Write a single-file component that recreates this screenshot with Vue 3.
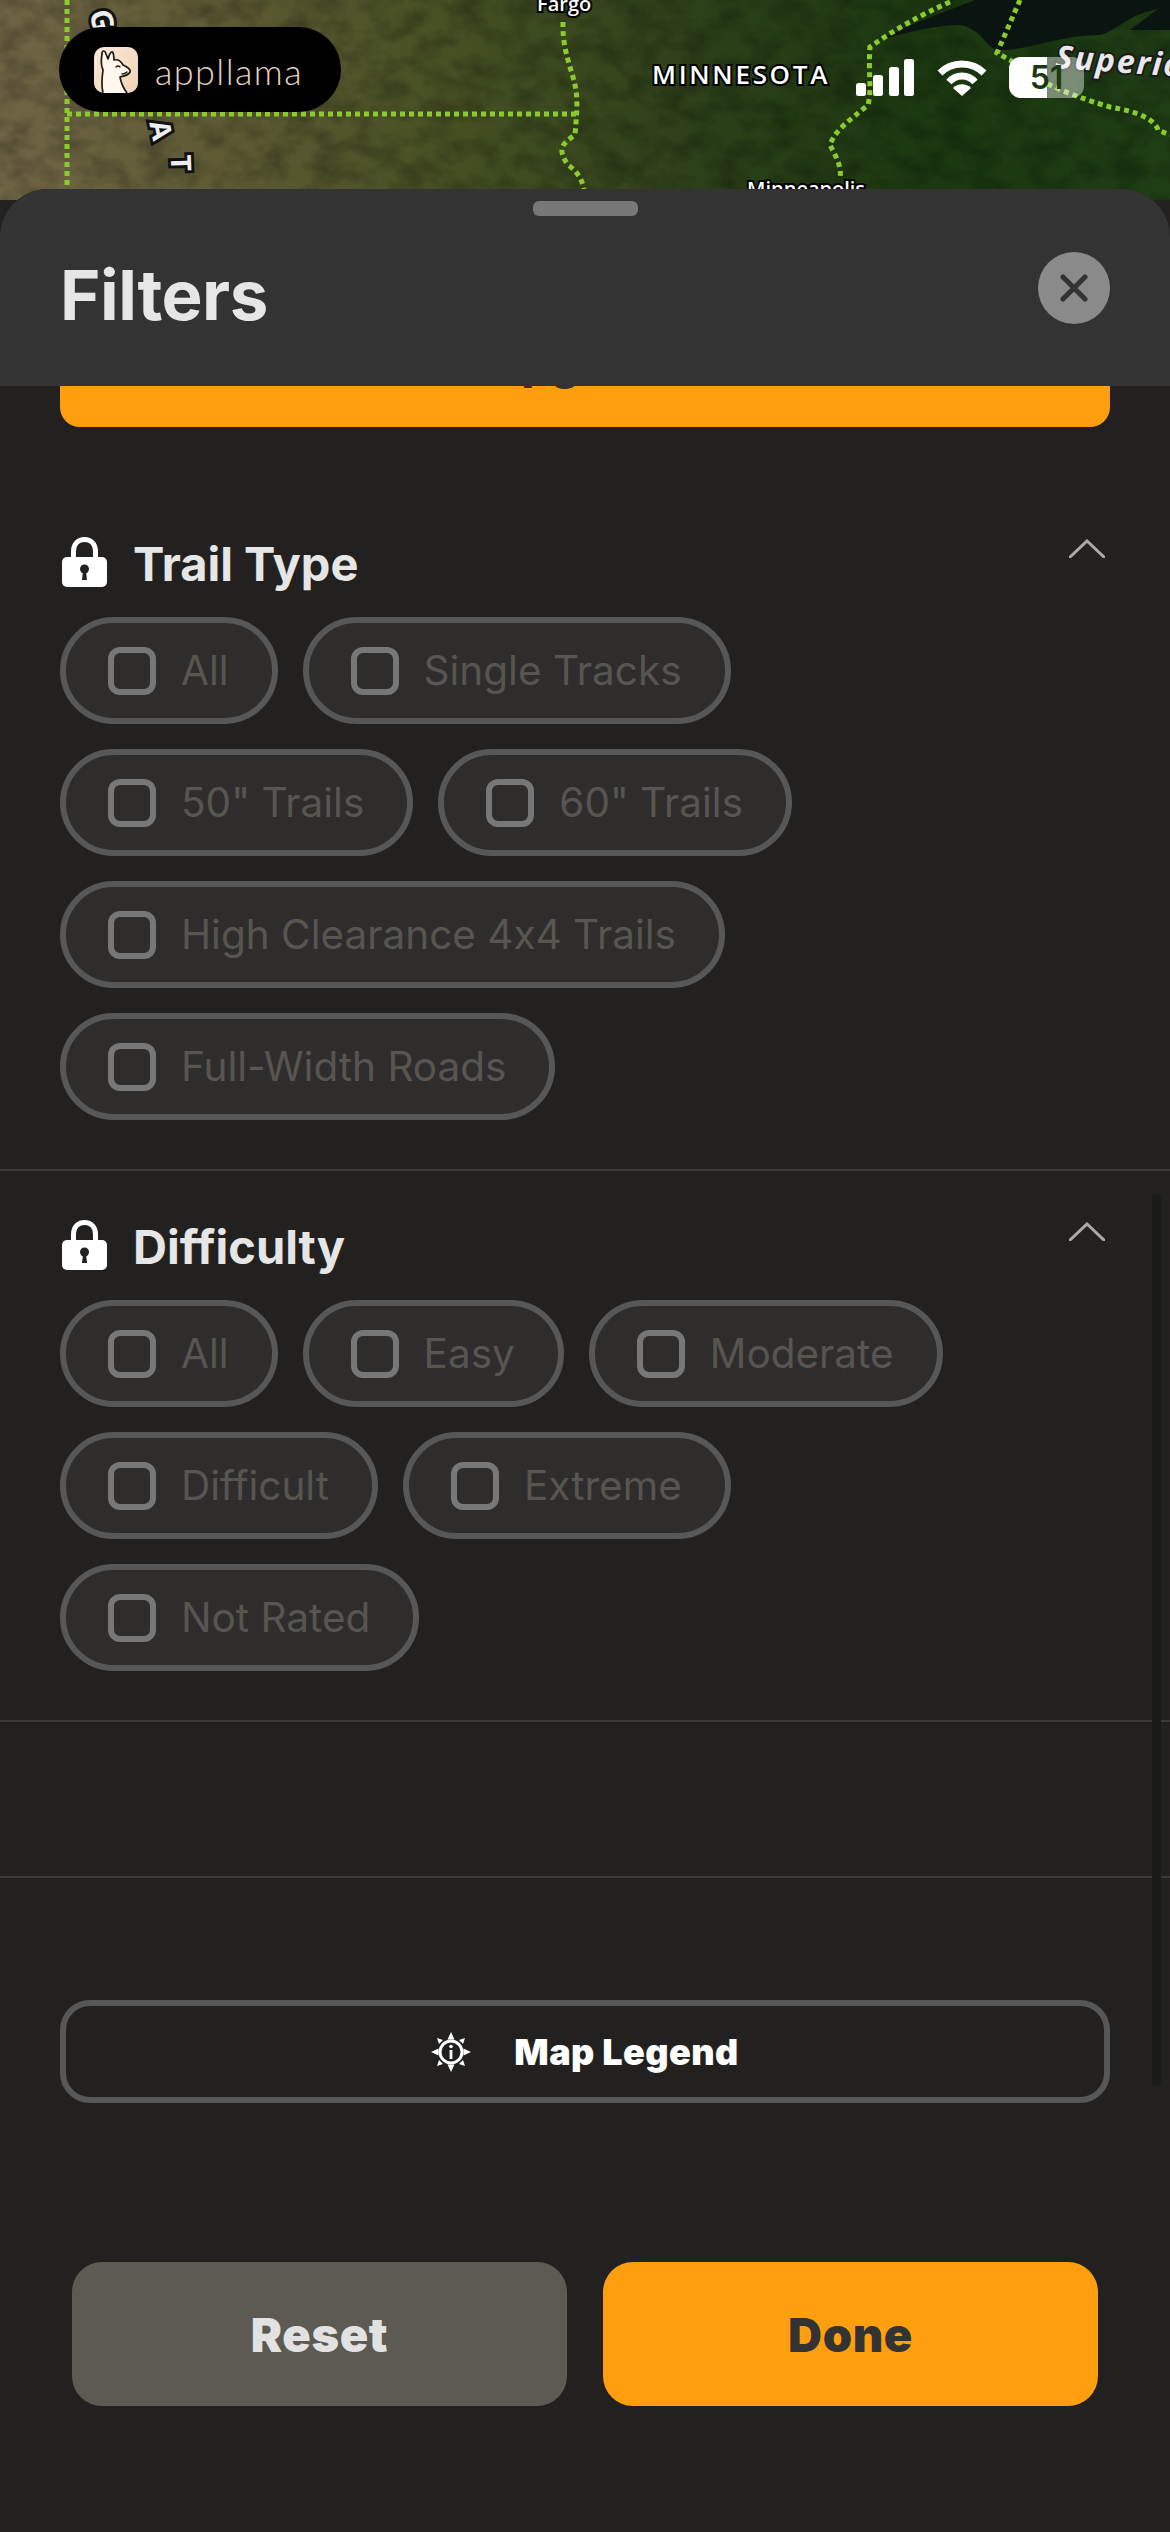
<template>
  <div class="screen">
    <!-- map behind the sheet -->
    <svg class="map" viewBox="0 0 1170 200" width="1170" height="200">
      <defs>
        <linearGradient id="land" x1="0" x2="1" y1="0" y2="0">
          <stop offset="0" stop-color="#6f6545" />
          <stop offset="0.2" stop-color="#5d5a33" />
          <stop offset="0.38" stop-color="#465023" />
          <stop offset="0.6" stop-color="#2c4019" />
          <stop offset="0.8" stop-color="#1b3810" />
          <stop offset="1" stop-color="#1f3e15" />
        </linearGradient>
        <linearGradient id="peach" x1="0" x2="1" y1="0" y2="1">
          <stop offset="0" stop-color="#fbeadb" />
          <stop offset="1" stop-color="#f0d2b2" />
        </linearGradient>
        <filter id="grain" x="0" y="0" width="100%" height="100%">
          <feTurbulence type="fractalNoise" baseFrequency="0.035 0.05" numOctaves="3" seed="7" />
          <feColorMatrix values="0 0 0 0 0  0 0 0 0 0  0 0 0 0 0  1.5 0 0 0 -0.55" />
        </filter>
      </defs>
      <rect width="1170" height="200" fill="url(#land)" />
      <rect width="1170" height="200" filter="url(#grain)" opacity="0.35" />
      <path d="M880 40 C920 20 950 10 975 0 H1170 V8 C1130 10 1120 30 1100 35 C1060 35 1030 50 1000 50 C985 50 985 30 960 25 C930 25 900 35 880 40Z" fill="#0a1410" />
      <path d="M1130 30 L1170 0 V30Z" fill="#0a1410" />

      <g class="border">
        <path d="M67 0 V189" />
        <path d="M67 114 H577" />
        <path d="M563 22 C562 50 572 70 575 85 C578 100 577 110 575 135 C560 145 558 150 568 165 C578 172 582 180 584 189" />
        <path d="M950 2 C920 15 895 30 880 40 L870 47 C868 70 872 90 868 105 C850 120 835 130 830 145 C835 155 842 165 840 180" />
        <path d="M1020 0 L997 53 L1010 60 C1040 85 1080 98 1110 107 C1140 112 1155 120 1158 130 L1170 135" />
      </g>

      <g class="label">
        <text class="label-city" x="537" y="11" font-size="20">Fargo</text>
        <text class="label-city" x="747" y="196" font-size="20">Minneapolis</text>
        <text class="label-state" x="652" y="84" font-size="26">MINNESOTA</text>
        <text class="label-water" transform="translate(1055 68) rotate(4)" font-size="32">Superior</text>
        <text class="label-letter" transform="translate(103 20) rotate(75)" font-size="30">G</text>
        <text class="label-letter" transform="translate(162 130) rotate(78)" font-size="28">A</text>
        <text class="label-letter" transform="translate(182 163) rotate(88)" font-size="28">T</text>
      </g>
    </svg>

    <!-- app badge -->
    <div class="badge">
      <div class="badge-icon">
        <svg viewBox="0 0 44 46" width="44" height="46">
          <rect width="44" height="46" fill="url(#peach)" />
          <path
            d="M9 46 C7 38 8 30 9 23 C7 19 7 13 8 7 C8 3 11 3 12 7 L14 12 C15 8 17 4 18.5 5 C20 7 20 10 20 13 C24 12 27 14 29 18 C33 20 37 22 36 25 C34 29 29 29 26 30 C27 36 30 42 33 46"
            fill="#fff6ec"
            stroke="#1d1a17"
            stroke-width="1.7"
            stroke-linejoin="round"
          />
          <path d="M22 20 q2 -2 4 0 M28 27 q3 0 5 -2" fill="none" stroke="#1d1a17" stroke-width="1.4" stroke-linecap="round" />
        </svg>
      </div>
      <span class="badge-name">appllama</span>
    </div>

    <!-- status bar icons -->
    <div class="status">
      <svg class="signal" viewBox="0 0 58 37" width="58" height="37" fill="#fff">
        <rect x="0" y="24" width="10" height="13" rx="2.5" />
        <rect x="17" y="16" width="10" height="21" rx="2.5" />
        <rect x="33" y="8" width="10" height="29" rx="2.5" />
        <rect x="48" y="0" width="10" height="37" rx="2.5" />
      </svg>
      <svg class="wifi" viewBox="0 0 50 37" width="50" height="37">
        <g fill="none" stroke="#fff" stroke-width="7">
          <path d="M3 14 C15 2 35 2 47 14" />
          <path d="M12 23 C19 15 31 15 38 23" />
        </g>
        <path d="M25 37 L16 29 C21 24 29 24 34 29Z" fill="#fff" />
      </svg>
      <div class="battery">
        <div class="battery-fill"></div>
        <span class="battery-level">51</span>
      </div>
    </div>

    <!-- filters sheet -->
    <section class="sheet">
      <header class="sheet-header">
        <div class="handle"></div>
        <div class="title-row">
          <h1>Filters</h1>
          <button class="close">
            <svg viewBox="0 0 28 28" width="28" height="28">
              <path d="M3 3 L25 25 M25 3 L3 25" stroke="#333" stroke-width="5" stroke-linecap="round" />
            </svg>
          </button>
        </div>
      </header>

      <div class="sheet-body">
        <div class="upgrade"><span>Upgrade</span></div>

        <div v-for="group in groups" :key="group.title" class="group">
          <div class="group-head">
            <svg class="lock" viewBox="0 0 45 50" width="45" height="50">
              <path d="M11.5 24 V14 C11.5 7 16 2.5 22.5 2.5 C29 2.5 33.5 7 33.5 14 V24" fill="none" stroke="#fff" stroke-width="5" />
              <rect y="20" width="45" height="30" rx="5" fill="#fff" />
              <circle cx="22.5" cy="32" r="4.5" fill="#222120" />
              <path d="M21 34 H24 L25 43 H20Z" fill="#222120" />
            </svg>
            <h2>{{ group.title }}</h2>
            <svg class="chevron" viewBox="0 0 36 19" width="36" height="19">
              <path d="M1 18 L18 2 L35 18" fill="none" stroke="#aaa" stroke-width="3" stroke-linecap="round" />
            </svg>
          </div>
          <div class="rows">
            <div v-for="(row, i) in group.rows" :key="i" class="row">
              <div v-for="name in row" :key="name" class="chip">
                <span class="box"></span>
                <span class="chip-label">{{ name }}</span>
              </div>
            </div>
          </div>
        </div>

        <div class="group-empty"></div>

        <button class="legend">
          <svg viewBox="0 0 40 40" width="40" height="40" fill="#fff">
            <path d="M20 0 L23.5 7.5 H16.5Z M20 40 L23.5 32.5 H16.5Z M0 20 L7.5 16.5 V23.5Z M40 20 L32.5 16.5 V23.5Z" />
            <path d="M6 6 L12 8 L8 12Z M34 6 L28 8 L32 12Z M6 34 L12 32 L8 28Z M34 34 L28 32 L32 28Z" />
            <circle cx="20" cy="20" r="11" fill="none" stroke="#fff" stroke-width="3" />
            <rect x="18.6" y="18" width="2.8" height="9" />
            <circle cx="20" cy="14.5" r="1.8" />
          </svg>
          <span>Map Legend</span>
        </button>

        <div class="actions">
          <button class="action action-reset">Reset</button>
          <button class="action action-done">Done</button>
        </div>
      </div>

      <div class="scrollbar"></div>
    </section>
  </div>
</template>

<script setup>
const groups = [
  {
    title: 'Trail Type',
    rows: [
      ['All', 'Single Tracks'],
      ['50" Trails', '60" Trails'],
      ['High Clearance 4x4 Trails'],
      ['Full-Width Roads']
    ]
  },
  {
    title: 'Difficulty',
    rows: [
      ['All', 'Easy', 'Moderate'],
      ['Difficult', 'Extreme'],
      ['Not Rated']
    ]
  }
]
</script>

<style>
html,
body {
  margin: 0;
  background: #222120;
}
</style>

<style scoped>
.screen {
  position: relative;
  width: 1170px;
  height: 2532px;
  overflow: hidden;
  font-family: Inter, "Liberation Sans", sans-serif;
  font-feature-settings: "calt" 0;
  background: #222120;
}

.map {
  position: absolute;
  top: 0;
  left: 0;
}

.border path {
  fill: none;
  stroke: #8ccb2f;
  stroke-width: 5;
  stroke-dasharray: 5 4;
}

.label text {
  font-family: "Open Sans", sans-serif;
  fill: #fff;
  stroke: #000;
  stroke-width: 4px;
  paint-order: stroke;
}

.label-state {
  letter-spacing: 2.7px;
  font-weight: 600;
}

.label-city {
  font-weight: 600;
}

.label .label-letter {
  font-weight: 700;
  text-anchor: middle;
  dominant-baseline: central;
  fill: #eee;
  stroke: #111;
  stroke-width: 6px;
}

.label .label-water {
  font-style: italic;
  font-weight: 700;
  letter-spacing: 2px;
  fill: #e8e8e8;
  stroke: #1a1a1a;
}

.badge {
  position: absolute;
  top: 27px;
  left: 59px;
  display: flex;
  align-items: center;
  gap: 17px;
  box-sizing: border-box;
  width: 282px;
  height: 85px;
  padding-left: 35px;
  border-radius: 43px;
  background: #000;
}

.badge-icon {
  width: 44px;
  height: 46px;
  border-radius: 10px;
  overflow: hidden;
  line-height: 0;
}

.badge-name {
  font-family: Lato, sans-serif;
  font-weight: 300;
  font-size: 36px;
  letter-spacing: 1.4px;
  color: #e6d3c2;
  margin-top: 3px;
}

.status {
  position: absolute;
  top: 57px;
  left: 856px;
  display: flex;
  align-items: flex-start;
  gap: 23px;
}

.signal,
.wifi {
  margin-top: 2px;
}

.battery {
  position: relative;
  width: 75px;
  height: 41px;
  margin-left: -1px;
  border-radius: 12px;
  overflow: hidden;
  background: rgba(255, 255, 255, 0.42);
}

.battery-fill {
  width: 38px;
  height: 100%;
  background: #fff;
}

.battery-level {
  position: absolute;
  top: 0;
  left: 0;
  width: 100%;
  font-size: 32px;
  font-weight: 600;
  line-height: 41px;
  text-align: center;
  color: #1c3a12;
}

.sheet {
  position: absolute;
  top: 189px;
  left: 0;
  right: 0;
  bottom: 0;
  border-radius: 48px 48px 0 0;
  overflow: hidden;
  background: #222120;
}

.sheet-header {
  box-sizing: border-box;
  height: 197px;
  padding-top: 12px;
  background: #333;
}

.handle {
  width: 105px;
  height: 15px;
  margin: 0 auto;
  border-radius: 6px;
  background: #777;
}

.title-row {
  display: flex;
  align-items: flex-start;
  justify-content: space-between;
  padding: 36px 60px 0;
}

.title-row h1 {
  margin: 7px 0 0;
  font-size: 69px;
  font-weight: 700;
  letter-spacing: -0.5px;
  line-height: 72px;
  color: #e6e6e6;
}

.close {
  display: flex;
  align-items: center;
  justify-content: center;
  width: 72px;
  height: 72px;
  padding: 0;
  border: 0;
  border-radius: 50%;
  background: #8a8a8a;
}

.upgrade {
  display: flex;
  justify-content: center;
  align-items: flex-start;
  height: 41px;
  margin: 0 60px;
  overflow: hidden;
  border-radius: 0 0 20px 20px;
  background: #ff9f0f;
}

.upgrade span {
  margin-top: -44px;
  font-size: 46px;
  font-weight: 800;
  line-height: 40px;
  color: #333;
}

.group {
  padding: 0 60px 49px;
  border-bottom: 2px solid #3c3b3a;
}

.group-head {
  display: flex;
  align-items: flex-end;
  gap: 26px;
  box-sizing: border-box;
  height: 129px;
  padding-bottom: 30px;
}

.upgrade + .group .group-head {
  height: 190px;
}

.lock {
  margin-left: 2px;
}

.group-head h2 {
  flex: 1;
  margin: 0 0 -2px;
  font-size: 47px;
  font-weight: 700;
  line-height: 50px;
  color: #e6e6e6;
}

.chevron {
  margin: 0 5px 29px 0;
}

.rows {
  display: flex;
  flex-direction: column;
  gap: 25px;
}

.row {
  display: flex;
  gap: 25px;
}

.chip {
  display: flex;
  align-items: center;
  gap: 25px;
  box-sizing: border-box;
  height: 107px;
  padding: 0 43px 0 42px;
  border: 6px solid #575757;
  border-radius: 54px;
  background: #2e2d2c;
}

.box {
  box-sizing: border-box;
  width: 48px;
  height: 48px;
  border: 6px solid #777;
  border-radius: 12px;
}

.chip-label {
  font-size: 40.5px;
  color: #575550;
}

.group-empty {
  height: 154px;
  border-bottom: 2px solid #3c3b3a;
}

.legend {
  display: flex;
  align-items: center;
  justify-content: center;
  gap: 43px;
  box-sizing: border-box;
  width: 1050px;
  height: 103px;
  margin: 122px 60px 0;
  border: 6px solid #575757;
  border-radius: 30px;
  background: transparent;
  font-family: inherit;
  font-size: 36px;
  font-weight: 900;
  letter-spacing: 0.4px;
  color: #fff;
}

.actions {
  display: flex;
  gap: 36px;
  margin: 159px 72px 0;
}

.action {
  flex: 1;
  height: 144px;
  border: 0;
  border-radius: 30px;
  font-family: inherit;
  font-size: 47px;
  font-weight: 900;
  letter-spacing: 0.6px;
}

.action-reset {
  background: #5c5a52;
  color: #e2e2e2;
}

.action-done {
  background: #ff9f0f;
  color: #333;
}

/* scroll thumb lies over the list */
.scrollbar {
  position: absolute;
  top: 1005px;
  left: 1152px;
  width: 9px;
  height: 892px;
  border-radius: 4px;
  background: #1a1a19;
}
</style>
